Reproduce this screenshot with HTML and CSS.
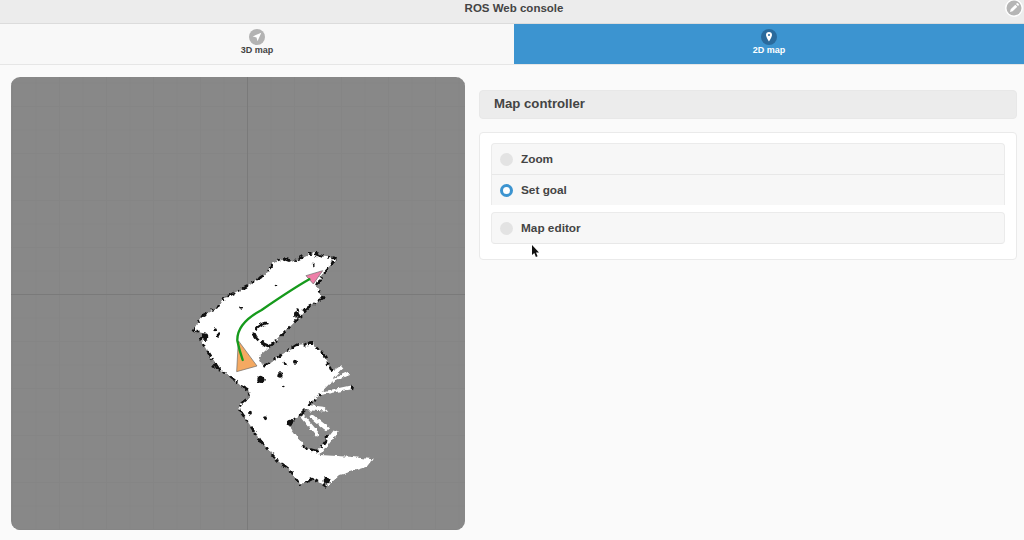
FILE: index.html
```html
<!DOCTYPE html>
<html lang="en">
<head>
<meta charset="utf-8">
<title>ROS Web console</title>
<link rel="stylesheet" href="styles.css">
</head>
<body>
<header class="topbar">
  <h1 class="title">ROS Web console</h1>
  <button class="edit" aria-label="Edit">
    <svg viewBox="0 0 16 16" width="16" height="16"><circle cx="8" cy="8" r="7.5" fill="#b5b5b5"/><path d="M4 12l.7-2.700 4.600-4.600 2 2-4.600 4.600zM10 4l.8-.8a.7.7 0 0 1 1 0l1 1a.7.7 0 0 1 0 1l-.8.8z" fill="#fff"/></svg>
  </button>
</header>
<nav class="tabs">
  <a class="tab">
    <svg class="tab-icon" viewBox="0 0 16 16" width="16" height="16"><circle cx="8" cy="8" r="8" fill="#b3b3b3"/><path d="M12.300 3.700L3.600 7.400l3.900 1 1 3.900z" fill="#fff"/></svg>
    <span>3D map</span>
  </a>
  <a class="tab active">
    <svg class="tab-icon" viewBox="0 0 16 16" width="16" height="16"><circle cx="8" cy="8" r="8" fill="#2a6a9c"/><path fill-rule="evenodd" d="M8 3a3 3 0 0 1 3 3c0 2-3 6.500-3 6.500S5 8 5 6a3 3 0 0 1 3-3zm0 2a1 1 0 1 0 0 2 1 1 0 0 0 0-2z" fill="#fff"/></svg>
    <span>2D map</span>
  </a>
</nav>
<main class="content">
  <section class="map">
    <svg class="map-svg" viewBox="11 77 454 453" width="454" height="453">
      <defs>
        <pattern id="grid" x="12" y="12" width="23.500" height="23.500" patternUnits="userSpaceOnUse">
          <path d="M23.500 .5H.5V23.500" fill="none" stroke="#858585" stroke-width="1"/>
        </pattern>
        <filter id="rough" x="-5%" y="-5%" width="110%" height="110%" color-interpolation-filters="sRGB">
          <feTurbulence type="fractalNoise" baseFrequency=".07" numOctaves="2" seed="4"/>
          <feDisplacementMap in="SourceGraphic" scale="14" xChannelSelector="R" yChannelSelector="G"/>
          <feGaussianBlur stdDeviation="2"/>
        </filter>
      </defs>
      <rect x="11" y="77" width="454" height="453" fill="url(#grid)"/>
      <path class="axes" d="M247.500 77V530M11 294.500H465"/>
      <g transform="translate(180 240) scale(.3333)">
        <g filter="url(#rough)">
          <path class="floor" d="M470 55L430 50 400 40 380 45 340 65 310 55 280 70 260 100 215 130 180 150 130 175 110 205 70 225 50 255 40 272 70 280 62 300 80 330 115 385 150 410 180 435 205 450 210 470 185 490 175 505 200 540 240 600 290 660 330 690 360 735 400 715 440 740 480 705 560 680 578 658 510 650 420 645 415 635 380 625 365 610 325 555 375 510 445 515 430 500 385 495 420 465 520 447 518 435 425 455 450 430 510 405 505 395 460 415 490 385 485 376 455 395 435 350 400 310 350 315 250 380 235 350 270 320 350 240 380 205 430 175 410 140 430 100z"/>
          <path class="floor" d="M360 530L372 524 420 582 408 590zM388 530L398 524 447 562 440 574zM410 635L464 568 474 576 422 645z"/>
          <path class="edge" d="M470 55L430 50 400 40 380 45 340 65 310 55 280 70 260 100 215 130 180 150 130 175 110 205 70 225 50 255 40 272 70 280 62 300 80 330 115 385 150 410 180 435 205 450 210 470 185 490 175 505 200 540 240 600 290 660 330 690 360 735 400 715 440 740"/>
          <path class="edge" d="M325 555L375 510M440 600L415 635 380 625 365 610M385 495L420 465M455 395L435 350 400 310 350 315 250 380M380 205L430 175 410 140 430 100 470 55M270 320L350 240 380 205M516 447L518 435"/>
          <path class="wall" d="M262 248Q230 258 222 280 230 305 270 320"/>
          <g class="speck">
            <circle cx="243" cy="418" r="11"/><circle cx="75" cy="290" r="10"/><circle cx="105" cy="268" r="6"/><circle cx="300" cy="405" r="8"/><circle cx="350" cy="225" r="8"/><circle cx="345" cy="365" r="6"/><circle cx="315" cy="370" r="5"/><circle cx="210" cy="518" r="6"/><circle cx="255" cy="535" r="6"/><circle cx="330" cy="545" r="9"/><circle cx="440" cy="722" r="9"/><circle cx="285" cy="135" r="4"/><circle cx="185" cy="205" r="4"/><circle cx="115" cy="285" r="5"/><circle cx="400" cy="75" r="4"/><circle cx="310" cy="438" r="4"/><circle cx="355" cy="210" r="5"/><circle cx="100" cy="378" r="6"/><circle cx="440" cy="590" r="6"/><circle cx="370" cy="620" r="5"/>
          </g>
        </g>
        <g class="soft">
          <path class="goal" d="M378 107L428 92 400 132z"/>
          <path class="robot" d="M175 302L231 378 170 395z"/>
          <path class="route" d="M388 118Q340 145 245 210 170 250 172 302 178 330 188 360"/>
        </g>
      </g>
    </svg>
  </section>
  <section class="panel">
    <h2 class="panel-title">Map controller</h2>
    <div class="card">
      <ul class="group">
        <li class="row"><span class="radio"></span>Zoom</li>
        <li class="row"><span class="radio on"></span>Set goal</li>
      </ul>
      <ul class="group single">
        <li class="row"><span class="radio"></span>Map editor</li>
      </ul>
      <svg class="cursor" viewBox="0 0 9 13" width="9" height="13"><path d="M1 0l0 10 2.300-2 1.600 4 1.700-.7-1.600-3.800 3 0z" fill="#111"/></svg>
    </div>
  </section>
</main>
</body>
</html>
```
FILE: styles.css
```css
* { box-sizing: border-box; }
html, body { margin: 0; height: 100%; }
body {
  background: #fafafa;
  color: #444;
  font-family: "Liberation Sans", Arial, sans-serif;
  font-size: 12px;
  overflow: hidden;
}
.topbar {
  height: 24px;
  background: #ececec;
  border-bottom: 1px solid #dcdcdc;
  display: flex;
  align-items: flex-start;
  justify-content: center;
  padding-left: 4px;
  position: relative;
}
.title { margin: 1px 0 0; font-size: 11.5px; line-height: 15px; font-weight: 700; }
.edit {
  position: absolute;
  right: 1px;
  top: -1px;
  width: 18px;
  height: 18px;
  padding: 0;
  border: 1px solid #fff;
  border-radius: 50%;
  background: #fff;
  display: flex;
}
.tabs {
  height: 41px;
  display: grid;
  grid-template-columns: 514px 510px;
  background: #f8f8f8;
  border-bottom: 1px solid #e6e6e6;
}
.tab {
  display: flex;
  flex-direction: column;
  align-items: center;
  padding-top: 5px;
  font-size: 9px;
  line-height: 11px;
  font-weight: 700;
}
.tab.active { background: #3c94d0; color: #fff; }
.tab-icon { display: block; }
.content {
  display: flex;
  align-items: flex-start;
  gap: 14px;
  padding: 12px 7px 0 11px;
}
.map {
  width: 454px;
  height: 453px;
  flex: none;
  background: #888;
  border-radius: 9px;
  overflow: hidden;
}
.map-svg { display: block; }
.axes { fill: none; stroke: #7a7a7a; stroke-width: 1; }
.soft { filter: blur(.4px); }
.floor { fill: #fff; }
.edge { fill: none; stroke: #111; stroke-width: 8; stroke-dasharray: 16 7 6 14 24 10 8 18; }
.wall { fill: none; stroke: #111; stroke-width: 9; stroke-dasharray: 42 6 30 8; }
.speck { fill: #111; }
.goal { fill: #ee7fa8; stroke: #666; stroke-width: 2; }
.robot { fill: #f4a962; stroke: #666; stroke-width: 2; }
.route { fill: none; stroke: #169a1c; stroke-width: 7; stroke-linecap: round; }
.panel { flex: 1; padding-top: 13px; }
.panel-title {
  margin: 0 0 13px;
  height: 29px;
  padding-left: 14px;
  background: #ececec;
  border: 1px solid #e8e8e8;
  border-radius: 4px;
  font-size: 13.2px;
  line-height: 26px;
  font-weight: 700;
}
.card {
  height: 128px;
  padding: 10px 11px 0;
  background: #fff;
  border: 1px solid #eaeaea;
  border-radius: 4px;
  position: relative;
}
.group {
  list-style: none;
  margin: 0 0 7px;
  padding: 0;
  background: #f7f7f7;
  border: 1px solid #ebebeb;
  border-bottom: 0;
  border-radius: 4px 4px 0 0;
}
.group.single { border-bottom: 1px solid #e8e8e8; border-radius: 4px; }
.row {
  height: 30px;
  display: flex;
  align-items: center;
  gap: 8px;
  padding-left: 8px;
  font-size: 11.8px;
  font-weight: 700;
}
.group .row + .row { height: 31px; border-top: 1px solid #e8e8e8; }
.radio {
  width: 13px;
  height: 13px;
  border-radius: 50%;
  background: #e3e3e3;
  flex: none;
}
.radio.on { background: #fff; border: 3.5px solid #3c94d0; }
.cursor { position: absolute; left: 51px; top: 112px; }
```
